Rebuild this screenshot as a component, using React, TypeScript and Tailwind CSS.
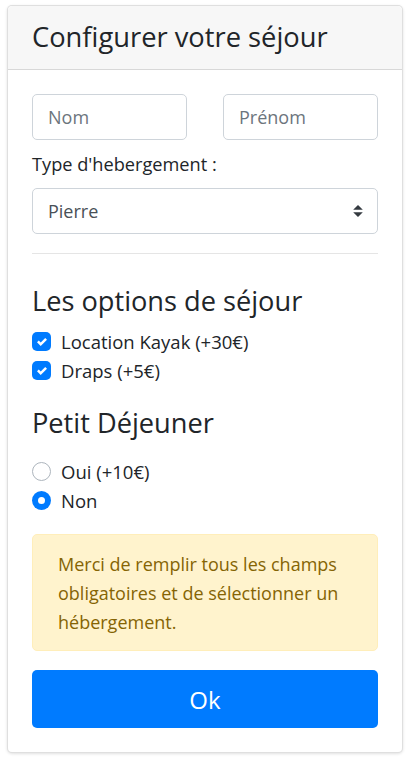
import React from "react";

const font = { fontFamily: '"Open Sans", "Noto Sans", sans-serif' };

function Check() {
  return (
    <span className="w-[19px] h-[19px] rounded-[5px] bg-[#007bff] flex items-center justify-center shrink-0">
      <svg width="10" height="10" viewBox="0 0 8 8">
        <path fill="#fff" d="M6.564.75l-3.59 3.612-1.538-1.55L0 4.26l2.974 2.99L8 2.193z" />
      </svg>
    </span>
  );
}

function Radio({ checked }: { checked: boolean }) {
  return checked ? (
    <span className="w-[19px] h-[19px] rounded-full bg-[#007bff] flex items-center justify-center shrink-0">
      <span className="w-[7px] h-[7px] rounded-full bg-white" />
    </span>
  ) : (
    <span className="w-[19px] h-[19px] rounded-full bg-white border border-[#adb5bd] shrink-0" />
  );
}

export default function App() {
  return (
    <div className="bg-white min-h-[766px] pt-[5px] pl-[7px]" style={font}>
      <div className="w-[396px] border border-[rgba(0,0,0,0.125)] rounded-[5px] bg-white shadow-[0_1px_3px_rgba(0,0,0,0.12)] text-[#212529]">
        <div className="h-[64px] bg-[#f7f7f7] border-b border-[rgba(0,0,0,0.125)] rounded-t-[5px] px-[24px] flex items-center">
          <h4 className="text-[27.3px] leading-[34.56px] font-normal">Configurer votre séjour</h4>
        </div>
        <div className="px-[24px] pt-[24px] pb-[24px]">
          <div className="grid grid-cols-2 gap-[36px]">
            <div className="h-[46px] border border-[#ced4da] rounded-[5px] flex items-center px-[15px] text-[18px] text-[#6c757d]">Nom</div>
            <div className="h-[46px] border border-[#ced4da] rounded-[5px] flex items-center px-[15px] text-[18px] text-[#6c757d]">Prénom</div>
          </div>
          <div className="mt-[10px] mb-[9px] h-[29px] text-[18.2px] leading-[29px]">Type d'hebergement :</div>
          <div className="h-[46px] border border-[#ced4da] rounded-[5px] flex items-center justify-between pl-[15px] pr-[14px] text-[18px] text-[#495057]">
            <span>Pierre</span>
            <svg width="10" height="12" viewBox="0 0 4 5">
              <path fill="#343a40" d="M2 0L0 2h4zm0 5L0 3h4z" />
            </svg>
          </div>
          <div className="mt-[19px] border-t border-[rgba(0,0,0,0.1)]" />
          <h4 className="mt-[29px] h-[35px] text-[27.2px] leading-[35px] font-normal">Les options de séjour</h4>
          <div className="mt-[9px]">
            <div className="h-[29px] flex items-center gap-[10px] text-[18.5px]">
              <Check />
              <span>Location Kayak (+30€)</span>
            </div>
            <div className="h-[29px] flex items-center gap-[10px] text-[18.5px]">
              <Check />
              <span>Draps (+5€)</span>
            </div>
          </div>
          <h4 className="mt-[20px] h-[35px] text-[27.2px] leading-[35px] font-normal">Petit Déjeuner</h4>
          <div className="mt-[17px]">
            <div className="h-[29px] flex items-center gap-[10px] text-[18.5px]">
              <Radio checked={false} />
              <span>Oui (+10€)</span>
            </div>
            <div className="h-[29px] flex items-center gap-[10px] text-[18.5px]">
              <Radio checked={true} />
              <span>Non</span>
            </div>
          </div>
          <div className="mt-[19px] bg-[#fff3cd] border border-[#ffeeba] rounded-[5px] text-[#856404] px-[25px] pt-[15px] pb-[13px] text-[18px] leading-[29px]">
            Merci de remplir tous les champs obligatoires et de sélectionner un hébergement.
          </div>
          <div className="mt-[19px] h-[58px] bg-[#007bff] rounded-[5px] flex items-center justify-center text-white text-[24px] pt-[2px]">
            Ok
          </div>
        </div>
      </div>
    </div>
  );
}
